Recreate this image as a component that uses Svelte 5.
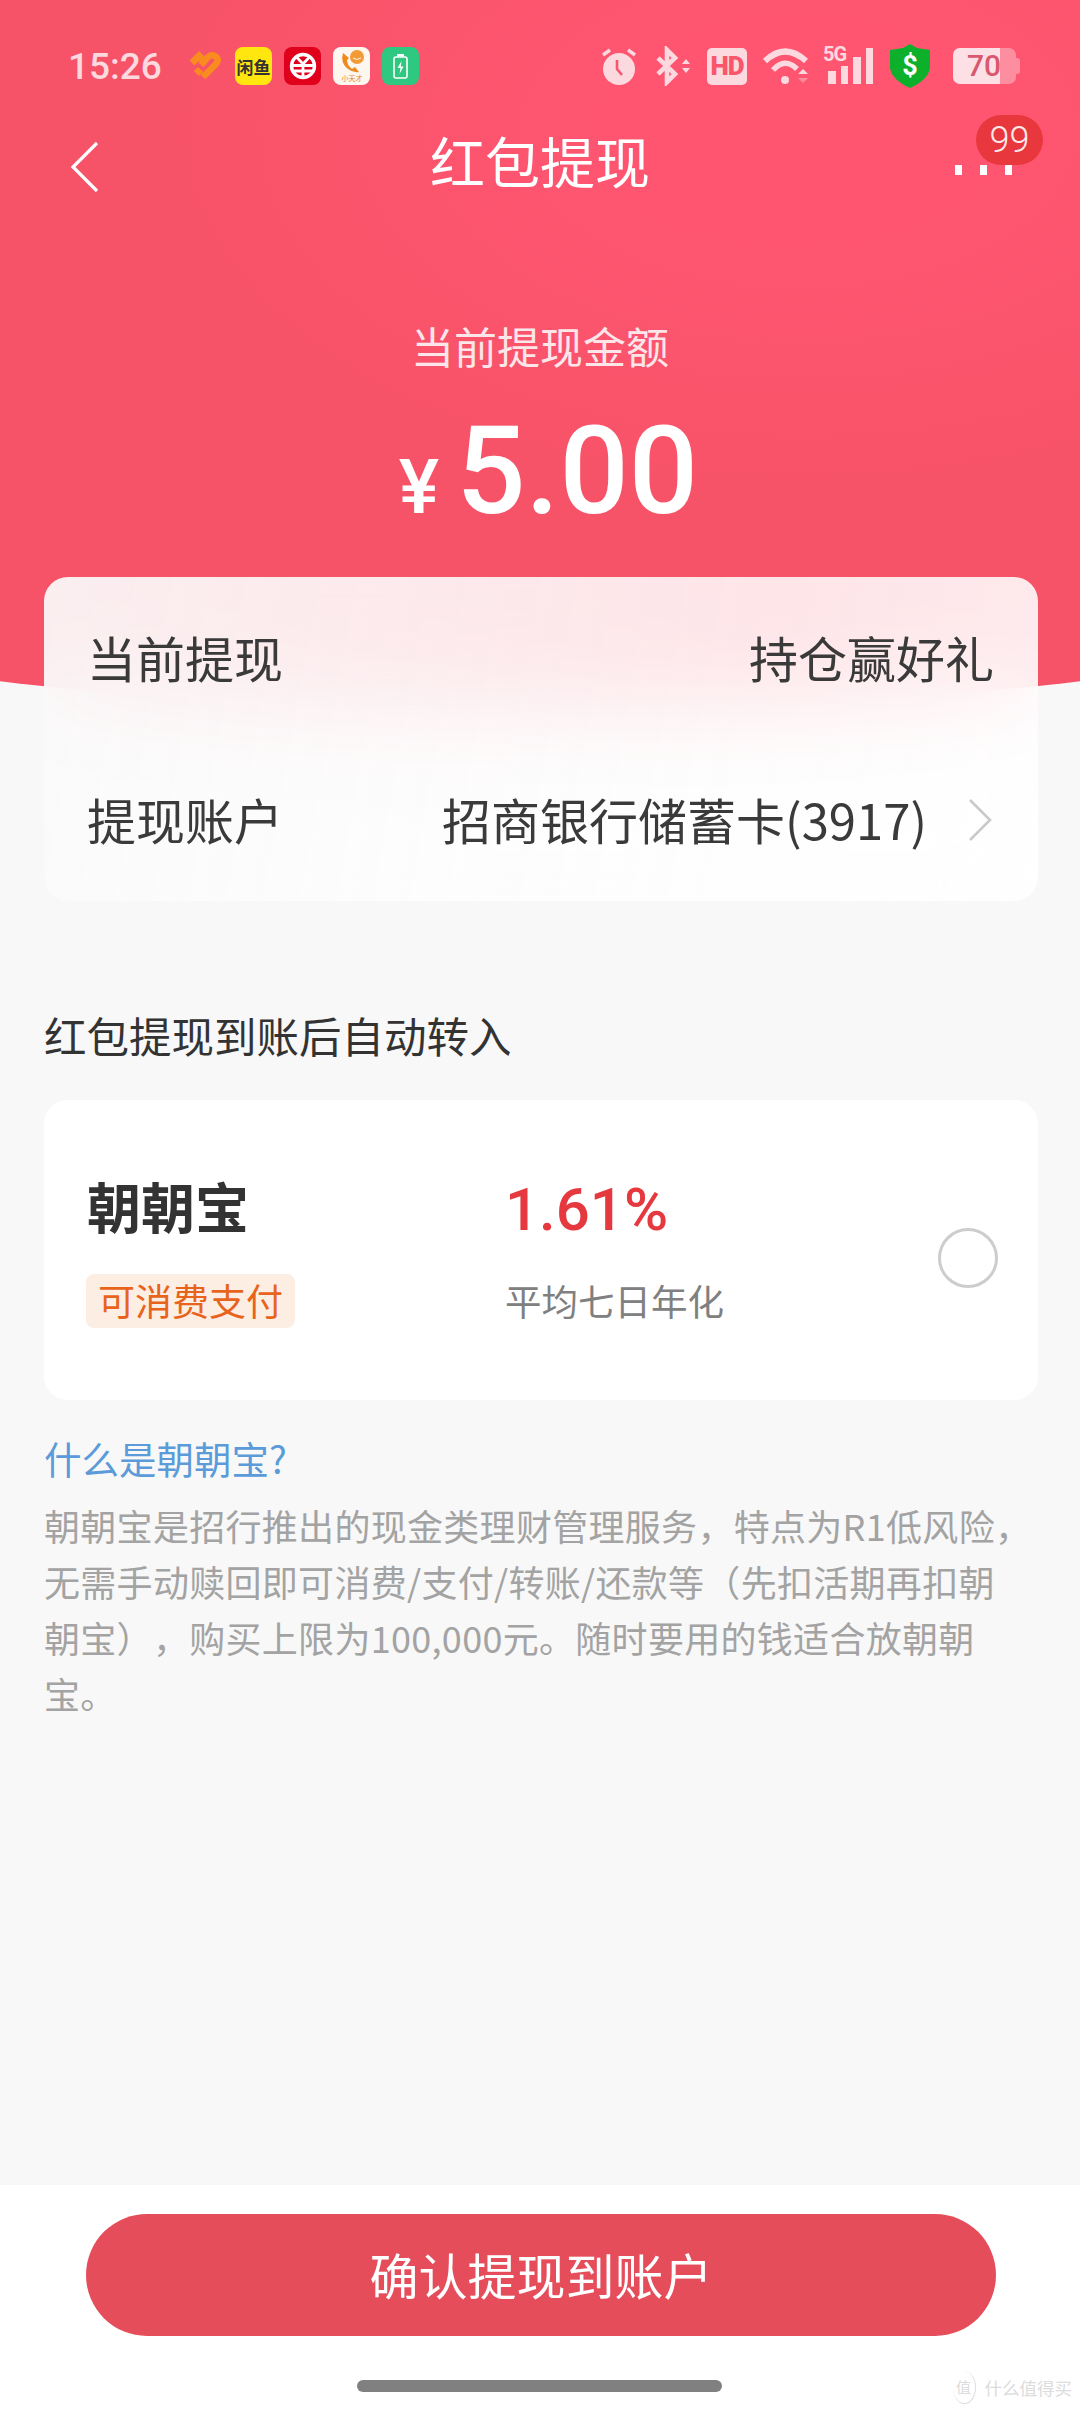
<script>
  // line breaks follow the screen, the CJK metrics here wrap one glyph later
  const notes = [
    '朝朝宝是招行推出的现金类理财管理服务，特点为R1低风险，',
    '无需手动赎回即可消费/支付/转账/还款等（先扣活期再扣朝',
    '朝宝），购买上限为100,000元。随时要用的钱适合放朝朝',
    '宝。'
  ];
</script>

<div class="page">
  <div class="hero-bg"></div>

  <!-- status bar -->
  <div class="status">
    <span class="time">15:26</span>
    <svg class="ic heart" viewBox="0 0 34 30" width="34" height="30">
      <path d="M4 12 L11 5 L17 11" fill="none" stroke="#f98c1f" stroke-width="7"/>
      <path d="M8 18 L13 23" fill="none" stroke="#f98c1f" stroke-width="6"/>
      <path d="M15 26 L28 13 Q32 8 27 5 Q23 3 20 6 L13 14" fill="none" stroke="#f98c1f" stroke-width="6.5"/>
    </svg>
    <span class="app xianyu">闲鱼</span>
    <span class="app bank">
      <svg viewBox="0 0 36 38" width="36" height="38">
        <circle cx="18" cy="19" r="11.5" fill="none" stroke="#fff" stroke-width="3.4"/>
        <path d="M11.5 10 L18 17 L24.5 10 M7 18.5 H29 M8 24 H28 M18 17 V31" fill="none" stroke="#fff" stroke-width="2.8"/>
      </svg>
    </span>
    <span class="app caller">
      <svg viewBox="0 0 36 38" width="36" height="38">
        <path d="M9 6 Q6 16 14 22 Q19 26 25 25 L21 20 L18 22 Q13 18 13 13 L15 11 Z" fill="#ef8a1e"/>
        <circle cx="23" cy="10" r="7" fill="#f29a35"/>
        <path d="M19 11 Q23 14 27 11" fill="none" stroke="#fdf7ef" stroke-width="1"/>
        <text x="18" y="34" class="caller-text">小天才</text>
      </svg>
    </span>
    <span class="app charge">
      <svg viewBox="0 0 37 38" width="37" height="38">
        <rect x="12" y="10" width="13" height="21" rx="2" fill="none" stroke="#fff" stroke-width="1.6"/>
        <rect x="15" y="7" width="7" height="2.5" fill="#fff"/>
        <path d="M19.5 14 L15.5 21 H18.5 L17.5 27 L21.5 19.5 H18.8 Z" fill="#fff"/>
      </svg>
    </span>

    <div class="status-right">
      <svg class="ic alarm" viewBox="0 0 36 38" width="36" height="38">
        <circle cx="18" cy="22" r="16" fill="#fcd9df"/>
        <path d="M16 13 V22 L21 28" fill="none" stroke="#f9566c" stroke-width="2.6"/>
        <path d="M2 8 L9 3 M34 8 L27 3" stroke="#fcd9df" stroke-width="3.4"/>
      </svg>
      <svg class="ic" viewBox="0 0 36 40" width="36" height="40">
        <path d="M3 12 L20 28 L12 36 V4 L20 12 L3 28" fill="none" stroke="#fcd9df" stroke-width="4.6"/>
        <path d="M27 18 L31 13 L35 18 Z M27 22 H35 L31 27 Z" fill="#fcd9df"/>
      </svg>
      <span class="hd">HD</span>
      <svg class="ic" viewBox="0 0 46 38" width="46" height="38">
        <path d="M2 14 Q22 -5 43 14" fill="none" stroke="#fcd9df" stroke-width="6"/>
        <path d="M10 23 Q22 10 34 22" fill="none" stroke="#fcd9df" stroke-width="5.5"/>
        <circle cx="22" cy="33" r="4" fill="#fcd9df"/>
        <path d="M35 27 L40 22 L45 27 Z" fill="#fcd9df"/>
        <path d="M35 31 H45 L40 36 Z" fill="#fb8d9d"/>
      </svg>
      <div class="signal">
        <span class="five-g">5G</span>
        <i style="height:13px"></i>
        <i style="height:18px"></i>
        <i style="height:27px"></i>
        <i style="height:36px"></i>
      </div>
      <svg class="ic" viewBox="0 0 40 44" width="40" height="44">
        <path d="M20 0 L27 4 L40 6 V24 Q38 36 20 44 Q2 36 0 24 V6 L13 4 Z" fill="#0db02b"/>
        <text x="20" y="31" class="dollar">$</text>
      </svg>
      <div class="battery">
        <div class="battery-body">
          <div class="battery-fill"></div>
          <span class="battery-num">70</span>
        </div>
      </div>
    </div>
  </div>

  <!-- nav -->
  <div class="nav">
    <svg class="back" viewBox="0 0 30 54" width="30" height="54">
      <path d="M27 4 L3 28 L27 52" fill="none" stroke="#fff" stroke-width="3.2"/>
    </svg>
    <h1>红包提现</h1>
    <div class="more">
      <i></i><i></i><i></i>
      <span class="badge">99</span>
    </div>
  </div>

  <!-- amount -->
  <div class="amount-label">当前提现金额</div>
  <div class="amount">
    <span class="yen">¥</span>
    <span class="value">5.00</span>
  </div>

  <div class="card info">
    <div class="row">
      <span>当前提现</span>
      <span>持仓赢好礼</span>
    </div>
    <div class="row">
      <span>提现账户</span>
      <span class="account">
        招商银行储蓄卡(3917)
        <svg viewBox="0 0 24 42" width="24" height="42">
          <path d="M2 1 L22 21 L2 41" fill="none" stroke="#c9c9c9" stroke-width="2.6"/>
        </svg>
      </span>
    </div>
  </div>

  <div class="section-title">红包提现到账后自动转入</div>

  <div class="card product">
    <div class="name">朝朝宝</div>
    <div class="rate">1.61%</div>
    <div class="radio"></div>
    <div><span class="tag">可消费支付</span></div>
    <div class="rate-label">平均七日年化</div>
  </div>

  <div class="link">什么是朝朝宝?</div>
  <div class="notes">
    {#each notes as line}
      <div>{line}</div>
    {/each}
  </div>

  <div class="footer">
    <button class="confirm">确认提现到账户</button>
    <div class="handle"></div>
  </div>

  <div class="watermark">
    <span class="wm-logo">值</span>
    <span>什么值得买</span>
  </div>
</div>

<style>
  :global(body) {
    margin: 0;
    background: #f8f8f8;
  }

  .page {
    position: relative;
    width: 1080px;
    height: 2414px;
    overflow: hidden;
    display: flex;
    flex-direction: column;
    background: #f8f8f8;
    font-family: "Noto Sans CJK SC", "Noto Sans", sans-serif;
    color: #3a3a3a;
    text-spacing-trim: space-all;
  }

  .hero-bg {
    position: absolute;
    top: 0;
    left: -260px;
    width: 1600px;
    height: 709px;
    background: radial-gradient(ellipse 640px 360px at 1060px 130px, #ff5571 30%, rgba(255, 85, 113, 0) 100%), #f75368;
    border-radius: 0 0 800px 800px / 0 0 106px 106px;
  }

  /* ── Status bar ─────────────────────────────────────────── */
  .status {
    position: relative;
    height: 100px;
    flex: none;
    display: flex;
    align-items: center;
    padding: 32px 60px 0 68px;
    box-sizing: border-box;
    color: #fcd9df;
  }

  .time {
    font-family: Roboto, sans-serif;
    font-weight: 500;
    font-size: 37px;
    width: 120px;
  }

  .ic {
    display: block;
    flex: none;
  }

  .heart {
    margin-right: 13px;
  }

  .app {
    width: 37px;
    height: 38px;
    border-radius: 8px;
    margin-right: 12px;
    display: flex;
    align-items: center;
    justify-content: center;
    flex: none;
    overflow: hidden;
  }

  .xianyu {
    background: #ffe60f;
    color: #333;
    font-size: 17px;
    font-weight: 700;
  }

  .bank { background: #e0001b; }
  .caller { background: #fdf7ef; }
  .charge { background: #2ec880; }

  .caller-text {
    font-size: 7px;
    fill: #e8822a;
    text-anchor: middle;
  }

  .status-right {
    margin-left: auto;
    display: flex;
    align-items: center;
    gap: 16px;
  }

  .alarm { margin-right: 2px; }

  .hd {
    width: 40px;
    height: 37px;
    border-radius: 5px;
    background: #fcd9df;
    color: #f9566c;
    font-family: Roboto, sans-serif;
    font-size: 26px;
    font-weight: 900;
    letter-spacing: -1px;
    display: flex;
    align-items: center;
    justify-content: center;
  }

  .signal {
    position: relative;
    width: 46px;
    height: 36px;
    margin-left: 3px;
    display: flex;
    align-items: flex-end;
    gap: 5px;
  }

  .signal i {
    width: 7.5px;
    background: #fcd9df;
  }

  .five-g {
    position: absolute;
    left: -5px;
    top: -4px;
    font-family: Roboto, sans-serif;
    font-size: 20px;
    font-weight: 700;
    letter-spacing: -1px;
    line-height: 1;
  }

  .dollar {
    font-family: Roboto, sans-serif;
    font-size: 27px;
    font-weight: 700;
    fill: #fff;
    text-anchor: middle;
  }

  .battery {
    position: relative;
    width: 67px;
    height: 36px;
    margin-left: 7px;
  }

  /* terminal nub */
  .battery::after {
    content: '';
    position: absolute;
    right: 0;
    top: 10px;
    width: 5px;
    height: 16px;
    border-radius: 0 3px 3px 0;
    background: #fd8ea0;
  }

  .battery-body {
    position: relative;
    width: 63px;
    height: 36px;
    border-radius: 7px;
    background: #fd8ea0;
    overflow: hidden;
  }

  .battery-fill {
    width: 47px;
    height: 100%;
    background: #fde0e5;
  }

  .battery-num {
    position: absolute;
    left: 14px;
    top: 0;
    width: 33px;
    overflow: hidden;
    font-family: Roboto, sans-serif;
    font-size: 30px;
    line-height: 36px;
    font-weight: 500;
    color: #d9586f;
  }

  /* ── Nav ────────────────────────────────────────────────── */
  .nav {
    position: relative;
    height: 120px;
    flex: none;
    display: flex;
    align-items: center;
    justify-content: center;
  }

  .nav h1 {
    margin: 0 0 3px;
    font-size: 55px;
    font-weight: 400;
    color: #fff;
  }

  .back {
    position: absolute;
    left: 70px;
    top: 39px;
  }

  .more {
    position: absolute;
    left: 955px;
    top: 65px;
    display: flex;
    gap: 18px;
  }

  .more i {
    width: 7px;
    height: 10px;
    background: #fff;
  }

  .badge {
    position: absolute;
    left: 21px;
    top: -50px;
    width: 67px;
    height: 50px;
    border-radius: 25px;
    background: #e8383d;
    color: #fdeaea;
    font-family: Roboto, sans-serif;
    font-size: 36px;
    font-weight: 300;
    line-height: 50px;
    text-align: center;
  }

  /* ── Amount ─────────────────────────────────────────────── */
  .amount-label {
    position: relative;
    margin-top: 95px;
    height: 60px;
    line-height: 60px;
    font-size: 43px;
    text-align: center;
    color: #fde6e9;
  }

  .amount {
    position: relative;
    margin-top: 27px;
    height: 140px;
    padding-left: 17px;
    display: flex;
    align-items: baseline;
    justify-content: center;
    gap: 17px;
    color: #fff;
    font-family: Roboto, sans-serif;
  }

  .yen {
    font-size: 76px;
    font-weight: 500;
  }

  .value {
    font-size: 122px;
    font-weight: 500;
    line-height: 140px;
  }

  /* ── Cards ──────────────────────────────────────────────── */
  .card {
    position: relative;
    margin: 0 42px 0 44px;
    flex: none;
    border-radius: 24px;
    background: #fff;
  }

  .info {
    margin-top: 35px;
    background: linear-gradient(100deg, rgba(250, 250, 250, 0.93) 0%, rgba(255, 255, 255, 0.85) 70%, rgba(255, 255, 255, 0.88) 100%);
    backdrop-filter: blur(46px);
    -webkit-backdrop-filter: blur(46px);
  }

  .row {
    height: 162px;
    box-sizing: border-box;
    padding: 0 44px 4px 43px;
    display: flex;
    align-items: center;
    justify-content: space-between;
    font-size: 49px;
  }

  .account {
    display: flex;
    align-items: center;
    gap: 41px;
  }

  .account svg {
    margin: 4px 2px 0 0;
  }

  .section-title {
    position: relative;
    margin: 104px 44px 35px;
    height: 60px;
    line-height: 60px;
    font-size: 42.5px;
    color: #333;
  }

  .product {
    height: 300px;
    box-sizing: border-box;
    padding: 76px 40px 0 44px;
    display: grid;
    grid-template-columns: 418px 1fr 60px;
    grid-template-rows: 60px 54px;
    row-gap: 38px;
  }

  .name {
    font-size: 54px;
    font-weight: 700;
    line-height: 60px;
    color: #333;
    margin-left: -1px;
  }

  .rate {
    font-family: Roboto, sans-serif;
    font-size: 60px;
    font-weight: 500;
    line-height: 68px;
    color: #e6393f;
    margin-left: -1px;
  }

  .radio {
    grid-column: 3;
    grid-row: 1 / 3;
    align-self: center;
    width: 60px;
    height: 60px;
    margin-top: 12px;
    box-sizing: border-box;
    border-radius: 50%;
    border: 3px solid #cdcdcd;
  }

  .tag {
    display: inline-block;
    height: 54px;
    line-height: 52px;
    margin-left: -2px;
    padding: 0 12px;
    border-radius: 8px;
    font-size: 37px;
    background: #fdeee3;
    color: #e8641c;
  }

  .rate-label {
    font-size: 36.5px;
    line-height: 54px;
    color: #808080;
    margin-left: -1px;
  }

  .link {
    position: relative;
    margin: 30px 44px 0;
    font-size: 37.5px;
    line-height: 56px;
    color: #5b9bd9;
  }

  .notes {
    margin: 11px 0 0 44px;
    font-size: 36px;
    line-height: 56px;
    letter-spacing: 0.3px;
    white-space: nowrap;
    color: #a3a3a3;
  }

  /* ── Footer ─────────────────────────────────────────────── */
  .footer {
    margin-top: auto;
    height: 229px;
    flex: none;
    box-sizing: border-box;
    padding-top: 29px;
    background: #fff;
  }

  .confirm {
    display: block;
    width: 910px;
    height: 122px;
    margin: 0 0 0 86px;
    padding: 0 0 4px;
    border: 0;
    border-radius: 61px;
    background: #e54d5b;
    color: #fff;
    font-family: inherit;
    font-size: 49px;
  }

  .handle {
    width: 365px;
    height: 12px;
    margin: 44px 0 0 357px;
    border-radius: 6px;
    background: #808080;
  }

  .watermark {
    position: absolute;
    right: 8px;
    bottom: 10px;
    display: flex;
    align-items: center;
    gap: 9px;
    font-size: 17.5px;
    color: #dcdcdc;
  }

  .wm-logo {
    width: 22px;
    height: 32px;
    font-size: 15px;
    line-height: 32px;
    text-align: center;
    border-radius: 50%;
    border-right: 1px solid #dcdcdc;
    border-bottom: 1px solid #dcdcdc;
  }
</style>
